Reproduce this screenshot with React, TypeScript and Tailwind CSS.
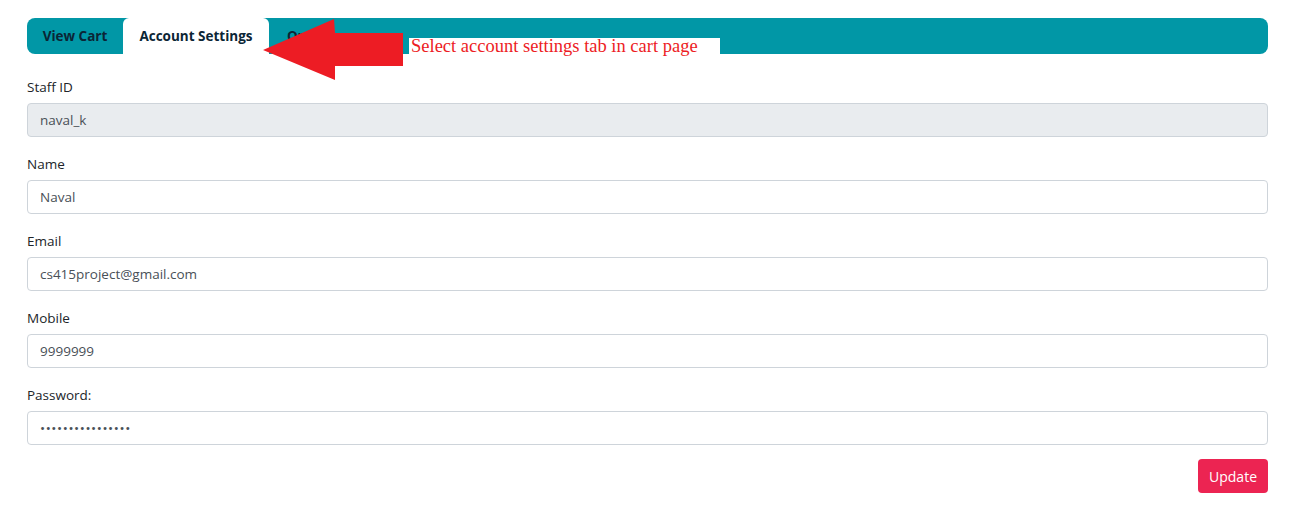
import type { ReactNode } from 'react'

const fields: Array<{ label: string; value: string; type?: string; disabled?: boolean }> = [
  { label: 'Staff ID', value: 'naval_k', disabled: true },
  { label: 'Name', value: 'Naval' },
  { label: 'Email', value: 'cs415project@gmail.com' },
  { label: 'Mobile', value: '9999999' },
  { label: 'Password:', value: 'abcdefghijklmnop', type: 'password' },
]

function Tab({ children, active, width }: { children: ReactNode; active?: boolean; width: string }) {
  return (
    <div
      className={`flex h-full items-center justify-center pt-[1px] text-[13.5px] font-bold text-[#0b2535] ${width} ${
        active ? 'rounded-t-md bg-white' : ''
      }`}
    >
      {children}
    </div>
  )
}

/** Red callout arrow drawn over the tab bar in the screenshot. */
function Callout() {
  return (
    <>
      <svg className="absolute left-[263px] top-[19px]" width="141" height="62" viewBox="0 0 141 62">
        <polygon points="0,31 71,0 72,14 140,14 140,47 72,47 72,61" fill="#ed1c24" />
      </svg>
      <div
        className="absolute left-[409px] top-[38px] h-[17px] w-[311px] bg-white pl-[2px] text-[18.5px] leading-[17px] text-[#ed1c24]"
        style={{ fontFamily: '"Liberation Serif", serif' }}
      >
        Select account settings tab in cart page
      </div>
    </>
  )
}

export default function App() {
  return (
    <div
      className="relative min-h-[514px] bg-white pl-[27px] pr-[23px] pt-[18px] text-[#212529]"
      style={{ fontFamily: '"Open Sans", "Noto Sans", sans-serif' }}
    >
      <div className="flex h-9 items-stretch rounded-lg bg-[#0197a6]">
        <Tab width="w-[96px]">View Cart</Tab>
        <Tab width="w-[146px]" active>
          Account Settings
        </Tab>
        <Tab width="w-[82px]">Orders</Tab>
      </div>
      <Callout />

      <form className="mt-[24px] flex flex-col" onSubmit={(e) => e.preventDefault()}>
        {fields.map((f) => (
          <div key={f.label} className="mb-[18px] flex flex-col">
            <label className="mb-[6px] text-[13.5px] leading-[19px]">{f.label}</label>
            <input
              type={f.type ?? 'text'}
              defaultValue={f.value}
              disabled={f.disabled}
              className={`h-[34px] rounded border border-[#ced4da] px-3 text-[13.5px] text-[#495057] outline-none ${
                f.disabled ? 'bg-[#e9ecef]' : 'bg-white'
              } ${f.type === 'password' ? 'tracking-[0.6px]' : ''}`}
            />
          </div>
        ))}
        <div className="flex justify-end">
          <button
            type="submit"
            className="mt-[-4px] h-[34px] rounded bg-[#ec2452] px-[11px] text-[14px] text-white"
          >
            Update
          </button>
        </div>
      </form>
    </div>
  )
}
